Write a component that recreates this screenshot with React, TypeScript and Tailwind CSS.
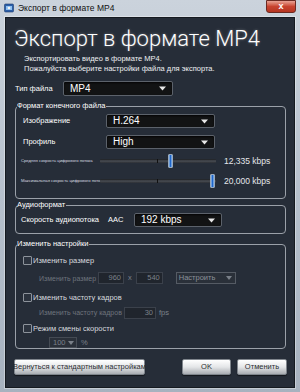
import React from "react";

const F = { fontFamily: '"Liberation Sans", "DejaVu Sans", Arial, sans-serif' };

function Select({ text, className }: { text: string; className: string }) {
  return (
    <div
      className={`flex items-center justify-between rounded-[2px] border border-[#5c626b] bg-[#121314] shadow-[inset_0_1px_2px_rgba(0,0,0,0.8)] ${className}`}
    >
      <span className="pl-[6px] text-[10px] leading-none text-white whitespace-nowrap">{text}</span>
      <svg width="7" height="5" viewBox="0 0 7 5" className="mr-[6px]">
        <path d="M0 0.5 H7 L3.5 4.5 Z" fill="#e8e8e8" />
      </svg>
    </div>
  );
}

function Slider({ label, value, pos }: { label: string; value: string; pos: number }) {
  return (
    <div className="flex h-[14px] items-center">
      <div className="w-[84px] shrink-0 pl-[5px] text-[4.2px] leading-none text-[#d8dbe0] whitespace-nowrap">
        {label}
      </div>
      <div className="relative h-[14px] w-[116px] shrink-0">
        <div className="absolute left-0 right-0 top-[5px] h-[4px] rounded-[1px] bg-gradient-to-b from-[#1a1c1f] via-[#4a4e55] to-[#2b2e33]" />
        <div className="absolute left-[57px] top-[5px] h-[4px] w-[1px] bg-[#111]" />
        <div
          className="absolute top-0 h-[14px] w-[5px] rounded-[1px] border border-[#9ab] bg-gradient-to-r from-[#8fb8e8] via-[#1f66c9] to-[#8fb8e8]"
          style={{ left: pos }}
        />
      </div>
      <div className="ml-[8px] text-[8.5px] leading-none text-[#e4e6ea] whitespace-nowrap">{value}</div>
    </div>
  );
}

function Group({ legend, className, children }: { legend: string; className: string; children: React.ReactNode }) {
  return (
    <div className={`relative ml-[9px] w-[271px] shrink-0 rounded-[4px] border border-[#9ba1a9] ${className}`}>
      <span className="absolute left-[1px] top-[-6px] bg-[#262d38] pr-[1px] text-[7.5px] leading-[10px] text-white whitespace-nowrap">
        {legend}
      </span>
      {children}
    </div>
  );
}

function Check({ label }: { label: string }) {
  return (
    <div className="flex h-[11px] items-center pl-[7px]">
      <div className="h-[9px] w-[9px] rounded-[1px] border border-[#8d939b] bg-[#2c333e]" />
      <span className="ml-[1px] text-[7.5px] leading-none text-[#d6d9de] whitespace-nowrap">{label}</span>
    </div>
  );
}

function Inp({ v, className }: { v: string; className: string }) {
  return (
    <div
      className={`flex h-[12px] items-center justify-end border border-[#3b414b] bg-[#20252d] pr-[2px] text-[7.5px] leading-none text-[#7b818a] ${className}`}
    >
      {v}
    </div>
  );
}

const btn =
  "flex h-[16px] items-center justify-center rounded-[2px] border border-[#7f858c] bg-gradient-to-b from-[#ffffff] via-[#e4e6e8] to-[#a9adb2] text-[7.5px] leading-none text-[#2a2d31] whitespace-nowrap shadow-[0_1px_1px_rgba(0,0,0,0.5)]";

export default function App() {
  return (
    <div
      style={F}
      className="flex h-[392px] w-[300px] flex-col overflow-hidden bg-gradient-to-b from-[#cbd3dc] via-[#b6c0cc] to-[#a7b2bf]"
    >
      {/* Title bar */}
      <div className="flex h-[17px] shrink-0 items-start">
        <svg width="10" height="10" viewBox="0 0 10 10" className="ml-[4px] mt-[3px]">
          <rect x="0.5" y="1" width="9" height="8" rx="1" fill="#2b5fa8" stroke="#1b3b6b" strokeWidth="0.6" />
          <rect x="2" y="3" width="6" height="4" fill="#8ec0f0" />
          <circle cx="5" cy="5" r="1.3" fill="#f4f4f4" />
        </svg>
        <span className="ml-[4px] mt-[3px] text-[8.5px] leading-[11px] text-[#111]">Экспорт в формате MP4</span>
        <div className="ml-auto mr-[4px] flex h-[13px] w-[30px] items-center justify-center rounded-b-[3px] border border-[#6b2a22] bg-gradient-to-b from-[#e8a294] via-[#c8432f] to-[#b53622]">
          <span className="text-[9px] font-bold leading-none text-white">x</span>
        </div>
      </div>

      {/* Body */}
      <div className="mx-[5px] mb-[4px] flex flex-1 flex-col border border-[#151a20] bg-[#262d38] shadow-[0_0_0_1px_rgba(255,255,255,0.35)]">
        <div
          className="shrink-0 whitespace-nowrap pl-[8px] pt-[6px] text-[22px] font-light leading-[30px] text-white [text-shadow:0_0_3px_rgba(255,255,255,0.35)]"
          style={{ fontFamily: 'Roboto, "Open Sans", sans-serif' }}
        >
          Экспорт в формате MP4
        </div>
        <div className="shrink-0 pl-[18px] text-[7.5px] leading-[10px] text-[#eef0f3] whitespace-nowrap">
          <div>Экспортировать видео в формате MP4.</div>
          <div>Пожалуйста выберите настройки файла для экспорта.</div>
        </div>

        <div className="mt-[7px] flex h-[15px] shrink-0 items-center">
          <span className="w-[57px] pl-[9px] text-[7.5px] leading-none text-white whitespace-nowrap">Тип файла</span>
          <Select text="MP4" className="h-[15px] w-[110px]" />
        </div>

        <Group legend="Формат конечного файла" className="mt-[10px] h-[93px] pt-[7px]">
          <div className="flex h-[14px] items-center">
            <span className="w-[90px] pl-[7px] text-[7.5px] leading-none text-white">Изображение</span>
            <Select text="H.264" className="h-[14px] w-[109px]" />
          </div>
          <div className="mt-[7px] flex h-[14px] items-center">
            <span className="w-[90px] pl-[7px] text-[7.5px] leading-none text-white">Профиль</span>
            <Select text="High" className="h-[14px] w-[109px]" />
          </div>
          <div className="mt-[5px]">
            <Slider label="Средняя скорость цифрового потока" value="12,335 kbps" pos={68} />
          </div>
          <div className="mt-[6px]">
            <Slider label="Максимальная скорость цифрового потока" value="20,000 kbps" pos={110} />
          </div>
        </Group>

        <Group legend="Аудиоформат" className="mt-[6px] h-[29px] pt-[7px]">
          <div className="flex h-[14px] items-center">
            <span className="w-[92px] pl-[5px] text-[7.5px] leading-none text-white whitespace-nowrap">Скорость аудиопотока</span>
            <span className="w-[26px] text-[7.5px] leading-none text-white">AAC</span>
            <Select text="192 kbps" className="h-[14px] w-[88px]" />
          </div>
        </Group>

        <Group legend="Изменить настройки" className="mt-[10px] h-[105px] pt-[10px]">
          <Check label="Изменить размер" />
          <div className="mt-[6px] flex h-[12px] items-center">
            <span className="w-[82px] pl-[23px] text-[7px] leading-none text-[#6e747d] whitespace-nowrap">Изменить размер</span>
            <Inp v="960" className="w-[26px]" />
            <span className="mx-[4px] text-[7.5px] leading-none text-[#7b818a]">x</span>
            <Inp v="540" className="w-[27px]" />
            <div className="ml-[13px] flex h-[12px] w-[60px] items-center justify-between border border-[#555b64] bg-[#2a3039] text-[7.5px] leading-none text-[#8a9099]">
              <span className="pl-[2px]">Настроить</span>
              <svg width="6" height="4" viewBox="0 0 6 4" className="mr-[3px]">
                <path d="M0 0 H6 L3 4 Z" fill="#7a8089" />
              </svg>
            </div>
          </div>
          <div className="mt-[8px]">
            <Check label="Изменить частоту кадров" />
          </div>
          <div className="mt-[4px] flex h-[11px] items-center">
            <span className="w-[108px] pl-[23px] text-[7px] leading-none text-[#6e747d] whitespace-nowrap">
              Изменить частоту кадров
            </span>
            <Inp v="30" className="h-[11px] w-[32px]" />
            <span className="ml-[3px] text-[7.5px] leading-none text-[#7b818a]">fps</span>
          </div>
          <div className="mt-[5px]">
            <Check label="Режим смены скорости" />
          </div>
          <div className="mt-[3px] flex h-[11px] items-center pl-[33px]">
            <div className="flex h-[11px] w-[28px] items-center justify-between border border-[#454b54] bg-[#2a3039] text-[7.5px] leading-none text-[#7b818a]">
              <span className="pl-[3px]">100</span>
              <svg width="6" height="4" viewBox="0 0 6 4" className="mr-[2px]">
                <path d="M0 0 H6 L3 4 Z" fill="#7a8089" />
              </svg>
            </div>
            <span className="ml-[4px] text-[7.5px] leading-none text-[#7b818a]">%</span>
          </div>
        </Group>

        <div className="mt-[10px] flex h-[16px] shrink-0 items-center">
          <button className={`ml-[8px] w-[131px] ${btn}`}>Вернуться к стандартным настройкам</button>
          <button className={`ml-[37px] w-[49px] ${btn}`}>OK</button>
          <button className={`ml-[6px] w-[50px] ${btn}`}>Отменить</button>
        </div>
      </div>
    </div>
  );
}
